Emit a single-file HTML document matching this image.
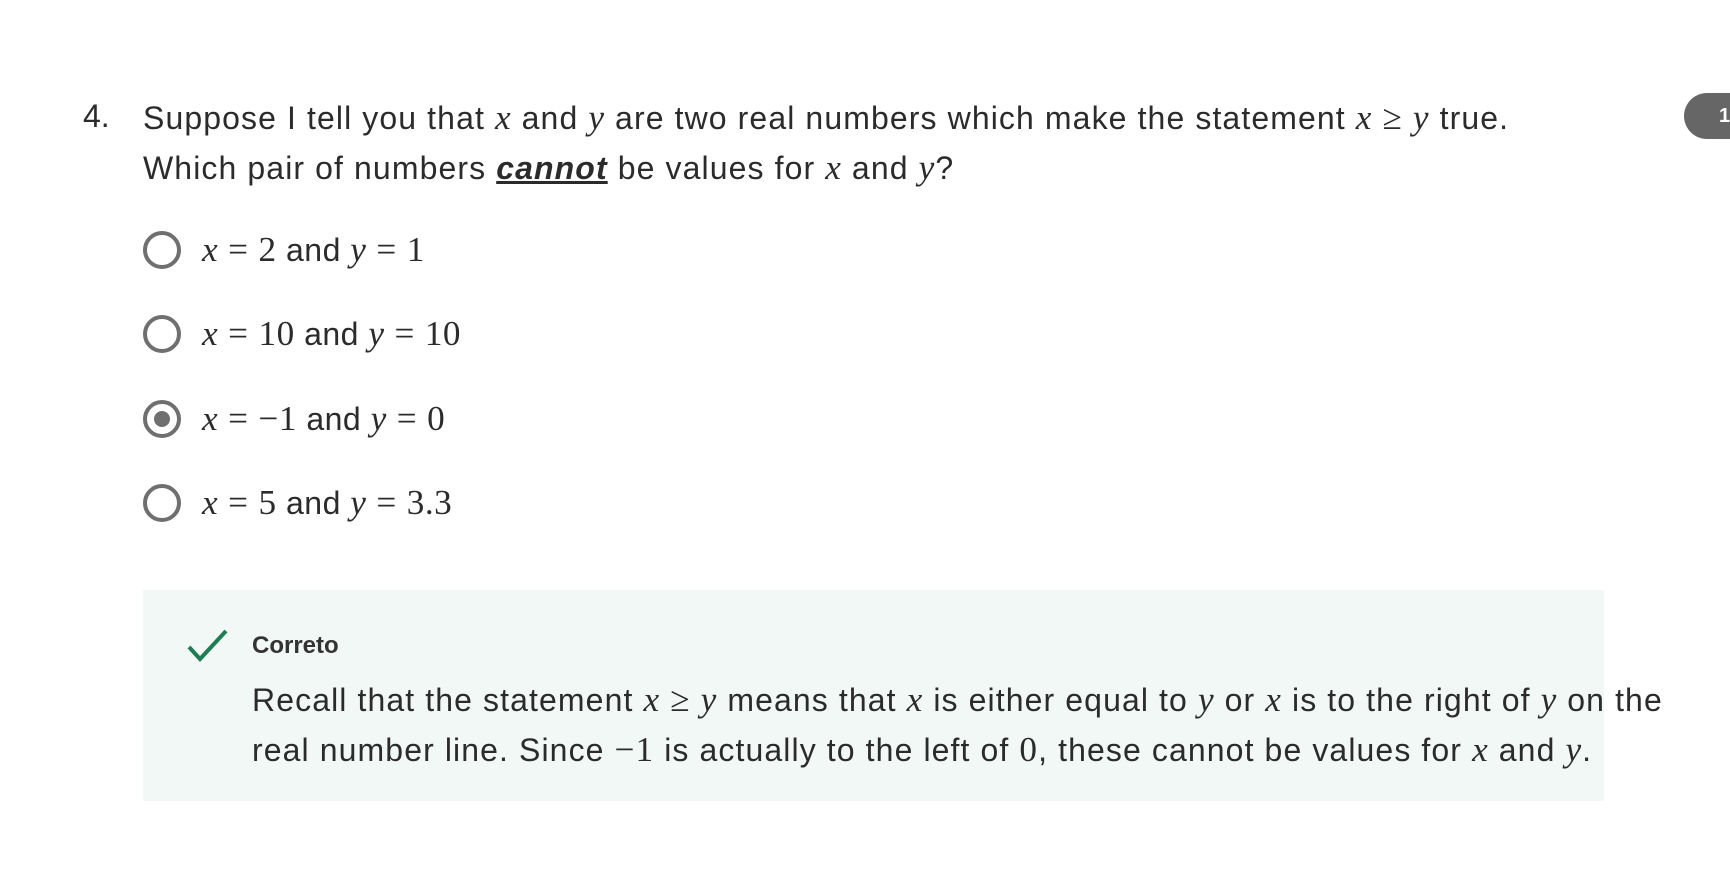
<!DOCTYPE html>
<html><head><meta charset="utf-8"><style>
body{margin:0;width:1730px;height:884px;background:#fff;position:relative;overflow:hidden;font-family:"Liberation Sans",sans-serif;color:#2b2b2b}
.a{position:absolute;white-space:nowrap}
.m{font-family:"Liberation Serif",serif;font-style:italic;font-size:1.1em}
.n{font-family:"Liberation Serif",serif;font-size:1.1em}
.e{font-family:"Liberation Serif",serif;font-size:1.1em;margin:0 10px}
.q{font-size:32px;letter-spacing:1.1px}
.r{position:absolute;left:143px;width:38px;height:38px;border:4px solid #6f6f6f;border-radius:50%;box-sizing:border-box}
.o{font-size:32px;letter-spacing:0.5px;left:202px}
</style></head><body>
<div class="a q" style="left:83px;top:98px;letter-spacing:0">4.</div>
<div class="a q" style="left:143px;top:98px">Suppose I tell you that <span class="m">x</span> and <span class="m">y</span> are two real numbers which make the statement <span class="m">x</span> <span class="n">≥</span> <span class="m">y</span> true.</div>
<div class="a q" style="left:143px;top:148px">Which pair of numbers <b style="text-decoration:underline;font-style:italic">cannot</b> be values for <span class="m">x</span> and <span class="m">y</span>?</div>

<div class="r" style="top:231px"></div>
<div class="a o" style="top:230px"><span class="m">x</span><span class="e">=</span><span class="n">2</span> and <span class="m">y</span><span class="e">=</span><span class="n">1</span></div>
<div class="r" style="top:315px"></div>
<div class="a o" style="top:314px"><span class="m">x</span><span class="e">=</span><span class="n">10</span> and <span class="m">y</span><span class="e">=</span><span class="n">10</span></div>
<div class="r" style="top:400px"><div style="position:absolute;left:7px;top:7px;width:16px;height:16px;border-radius:50%;background:#6f6f6f"></div></div>
<div class="a o" style="top:399px"><span class="m">x</span><span class="e">=</span><span class="n">−1</span> and <span class="m">y</span><span class="e">=</span><span class="n">0</span></div>
<div class="r" style="top:484px"></div>
<div class="a o" style="top:483px"><span class="m">x</span><span class="e">=</span><span class="n">5</span> and <span class="m">y</span><span class="e">=</span><span class="n">3.3</span></div>

<div style="position:absolute;left:143px;top:590px;width:1461px;height:211px;background:#f2f8f6"></div>
<svg style="position:absolute;left:186px;top:628px" width="44" height="36" viewBox="0 0 44 36"><path d="M3 19 L14 31 L40 3" fill="none" stroke="#1e7d52" stroke-width="4"/></svg>
<div class="a" style="left:252px;top:632px;font-size:24px;font-weight:bold;color:#333">Correto</div>
<div class="a q" style="left:252px;top:680px">Recall that the statement <span class="m">x</span> <span class="n">≥</span> <span class="m">y</span> means that <span class="m">x</span> is either equal to <span class="m">y</span> or <span class="m">x</span> is to the right of <span class="m">y</span> on the</div>
<div class="a q" style="left:252px;top:730px">real number line. Since <span class="n">−1</span> is actually to the left of <span class="n">0</span>, these cannot be values for <span class="m">x</span> and <span class="m">y</span>.</div>

<div style="position:absolute;left:1684px;top:93px;width:80px;height:46px;border-radius:23px;background:#666;color:#fff;font-weight:bold;font-size:20px;line-height:46px;padding-left:35px;box-sizing:border-box">1</div>
</body></html>
